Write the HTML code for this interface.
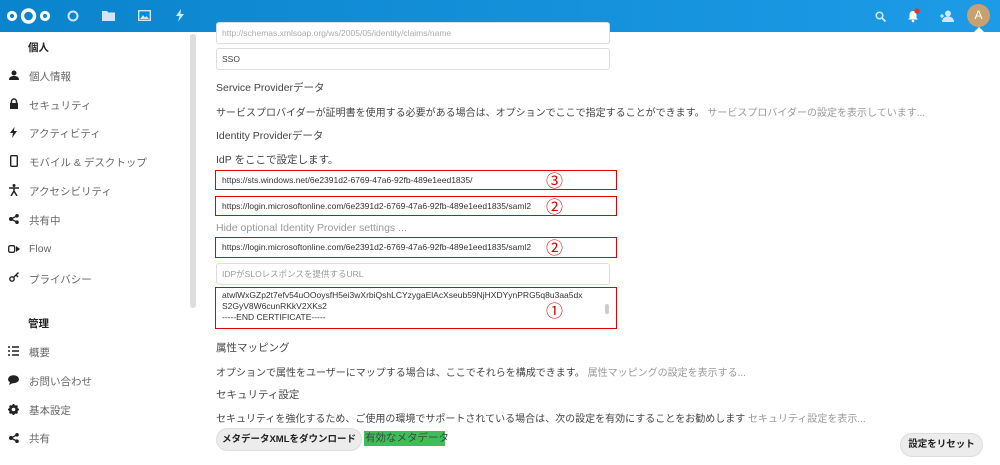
<!DOCTYPE html>
<html><head><meta charset="utf-8"><style>
*{margin:0;padding:0;box-sizing:border-box}
body{width:1000px;height:465px;overflow:hidden;background:#fff;font-family:"Liberation Sans","Noto Sans CJK JP",sans-serif;font-size:10.5px;color:#333;position:relative}
.hdr{position:absolute;left:0;top:0;width:1000px;height:32px;background:linear-gradient(90deg,#0a84cc,#1d9be6)}
.abs{position:absolute;white-space:nowrap}
.side{color:#666;font-size:10.5px}
.inp{position:absolute;left:216px;width:394px;border:1px solid #ddd;border-radius:3px;background:#fff;font-size:8.5px;color:#444;padding-left:5px}
.red{position:absolute;left:215px;width:402px;border:1.5px solid #e00000;font-size:8.5px;color:#333;padding-left:6px}
.num{position:absolute;left:546px;font-family:"Noto Sans CJK JP",sans-serif;font-size:17px;color:#d00;line-height:18px}
.t{position:absolute;left:216px;white-space:nowrap;color:#444}
.s{font-size:10px}
.g{color:#999}
</style></head><body>
<div class="hdr">
<svg class="abs" style="left:6px;top:6px" width="46" height="20" viewBox="0 0 46 20"><circle cx="6" cy="10" r="3.6" fill="none" stroke="#fff" stroke-width="3"/><circle cx="22.5" cy="10" r="6" fill="none" stroke="#fff" stroke-width="3.4"/><circle cx="39" cy="10" r="3.6" fill="none" stroke="#fff" stroke-width="3"/></svg>
<svg class="abs" style="left:67px;top:10px" width="12" height="12"><circle cx="6" cy="6" r="4.5" fill="none" stroke="#cfe6f7" stroke-width="2"/></svg>
<svg class="abs" style="left:102px;top:10px" width="13" height="11"><path d="M0 1h5l1.5 1.5H13V11H0z" fill="#cfe6f7"/></svg>
<svg class="abs" style="left:138px;top:10px" width="13" height="11"><rect x="0.7" y="0.7" width="11.6" height="9.6" fill="none" stroke="#cfe6f7" stroke-width="1.4"/><path d="M2 9l3-4 2 2.5 1.5-1.5L11 9z" fill="#cfe6f7"/></svg>
<svg class="abs" style="left:176px;top:9px" width="8" height="13"><path d="M5 0L0 7h3.5L2 13l6-8H4.5z" fill="#cfe6f7"/></svg>
<svg class="abs" style="left:875px;top:11px" width="11" height="11"><circle cx="4.5" cy="4.5" r="3.3" fill="none" stroke="#cfe6f7" stroke-width="1.5"/><path d="M7 7l3.5 3.5" stroke="#cfe6f7" stroke-width="1.8"/></svg>
<svg class="abs" style="left:907px;top:8px" width="14" height="15"><path d="M6 3c-2.5 0-3.5 2-3.5 4v3L1 11.5h10L9.5 10V7c0-2-1-4-3.5-4z" fill="#fff"/><circle cx="6" cy="13" r="1.3" fill="#fff"/><circle cx="10" cy="3" r="2.7" fill="#e9322d"/></svg>
<svg class="abs" style="left:940px;top:10px" width="14" height="12"><circle cx="8" cy="3.5" r="3" fill="#cfe6f7"/><path d="M2 12c0-4 3-5.5 6-5.5s6 1.5 6 5.5z" fill="#cfe6f7"/><path d="M0 6h4M2 4v4" stroke="#cfe6f7" stroke-width="1.3"/></svg>
<div class="abs" style="left:967px;top:4px;width:23px;height:23px;border-radius:50%;background:#c9a06f;color:#fff;font-size:12px;text-align:center;line-height:23px">A</div>
<div class="abs" style="left:974px;top:27px;width:0;height:0;border-left:5px solid transparent;border-right:5px solid transparent;border-bottom:5px solid #fff"></div>
</div>
<div class="abs" style="left:190px;top:34px;width:6px;height:274px;background:#ddd;border-radius:3px"></div>
<div class="abs" style="left:28px;top:40px;font-weight:bold;color:#222">個人</div>
<div class="abs side" style="left:29px;top:69px">個人情報</div><svg class="abs" style="left:9px;top:70px" width="10" height="10"><circle cx="5" cy="3" r="2.5" fill="#222"/><path d="M0 10c0-3 2-4 5-4s5 1 5 4z" fill="#222"/></svg>
<div class="abs side" style="left:29px;top:98px">セキュリティ</div><svg class="abs" style="left:9px;top:98px" width="10" height="11"><path d="M2.5 5V3.5a2.5 2.5 0 015 0V5" stroke="#222" stroke-width="1.5" fill="none"/><rect x="1" y="5" width="8" height="6" fill="#222"/></svg>
<div class="abs side" style="left:29px;top:126px">アクティビティ</div><svg class="abs" style="left:10px;top:127px" width="7" height="11"><path d="M4.5 0L0 6h3L2 11l5-7H4z" fill="#222"/></svg>
<div class="abs side" style="left:29px;top:155px">モバイル & デスクトップ</div><svg class="abs" style="left:10px;top:155px" width="8" height="12"><rect x="0.7" y="0.7" width="6.6" height="10.6" rx="1" fill="none" stroke="#222" stroke-width="1.4"/></svg>
<div class="abs side" style="left:29px;top:184px">アクセシビリティ</div><svg class="abs" style="left:9px;top:184px" width="10" height="12"><circle cx="5" cy="1.5" r="1.5" fill="#222"/><path d="M0 4h10M5 4v3M5 7l-3 5M5 7l3 5" stroke="#222" stroke-width="1.5"/></svg>
<div class="abs side" style="left:29px;top:213px">共有中</div><svg class="abs" style="left:9px;top:214px" width="10" height="10"><circle cx="2" cy="5" r="2" fill="#222"/><circle cx="8" cy="1.8" r="1.8" fill="#222"/><circle cx="8" cy="8.2" r="1.8" fill="#222"/><path d="M2 5l6-3.2M2 5l6 3.2" stroke="#222" stroke-width="1.3"/></svg>
<div class="abs side" style="left:29px;top:243px">Flow</div><svg class="abs" style="left:8px;top:245px" width="12" height="8"><rect x="0.7" y="0.7" width="6" height="6.6" rx="1.5" fill="none" stroke="#222" stroke-width="1.3"/><path d="M8 1l4 3-4 3z" fill="#222"/></svg>
<div class="abs side" style="left:29px;top:272px">プライバシー</div><svg class="abs" style="left:9px;top:272px" width="10" height="10"><circle cx="3" cy="7" r="2.2" fill="none" stroke="#222" stroke-width="1.4"/><path d="M4.5 5.5L9.5 0.5M7 3l2 2" stroke="#222" stroke-width="1.4"/></svg>
<div class="abs" style="left:28px;top:316px;font-weight:bold;color:#222">管理</div>
<div class="abs side" style="left:29px;top:345px">概要</div><svg class="abs" style="left:8px;top:346px" width="11" height="10"><path d="M0 1h2M0 5h2M0 9h2M4 1h7M4 5h7M4 9h7" stroke="#222" stroke-width="1.6"/></svg>
<div class="abs side" style="left:29px;top:374px">お問い合わせ</div><svg class="abs" style="left:8px;top:375px" width="11" height="10"><ellipse cx="5.5" cy="4.2" rx="5.5" ry="4" fill="#222"/><path d="M2 7l-1 3 4-2z" fill="#222"/></svg>
<div class="abs side" style="left:29px;top:403px">基本設定</div><svg class="abs" style="left:8px;top:404px" width="11" height="11"><circle cx="5.5" cy="5.5" r="3.5" fill="none" stroke="#222" stroke-width="2.2"/><path d="M5.5 0v11M0 5.5h11M1.6 1.6l7.8 7.8M9.4 1.6l-7.8 7.8" stroke="#222" stroke-width="1.8"/><circle cx="5.5" cy="5.5" r="1.8" fill="#fff"/></svg>
<div class="abs side" style="left:29px;top:431px">共有</div><svg class="abs" style="left:9px;top:433px" width="10" height="10"><circle cx="2" cy="5" r="2" fill="#222"/><circle cx="8" cy="1.8" r="1.8" fill="#222"/><circle cx="8" cy="8.2" r="1.8" fill="#222"/><path d="M2 5l6-3.2M2 5l6 3.2" stroke="#222" stroke-width="1.3"/></svg>
<div class="inp" style="top:22px;height:22px;line-height:20px;color:#aaa">http://schemas.xmlsoap.org/ws/2005/05/identity/claims/name</div>
<div class="inp" style="top:48px;height:22px;line-height:20px">SSO</div>
<div class="t" style="top:80px">Service Providerデータ</div>
<div class="t s" style="top:104px">サービスプロバイダーが証明書を使用する必要がある場合は、オプションでここで指定することができます。 <span class="g">サービスプロバイダーの設定を表示しています...</span></div>
<div class="t" style="top:128px">Identity Providerデータ</div>
<div class="t" style="top:152px">IdP をここで設定します。</div>
<div class="red" style="top:170px;height:20px;line-height:18px">https://sts.windows.net/6e2391d2-6769-47a6-92fb-489e1eed1835/</div><div class="num" style="top:171px">③</div>
<div class="red" style="top:196px;height:20px;line-height:18px">https://login.microsoftonline.com/6e2391d2-6769-47a6-92fb-489e1eed1835/saml2</div><div class="num" style="top:197px">②</div>
<div class="t g" style="top:222px">Hide optional Identity Provider settings ...</div>
<div class="red" style="top:237px;height:21px;line-height:19px">https://login.microsoftonline.com/6e2391d2-6769-47a6-92fb-489e1eed1835/saml2</div><div class="num" style="top:238px">②</div>
<div class="inp" style="top:263px;height:22px;line-height:20px;color:#999">IDPがSLOレスポンスを提供するURL</div>
<div class="red" style="top:287px;height:42px;line-height:11px;padding-top:2px">atwlWxGZp2t7efv54uOOoysfH5ei3wXrbiQshLCYzygaElAcXseub59NjHXDYynPRG5q8u3aa5dx<br>S2GyV8W6cunRKkV2XKs2<br>-----END CERTIFICATE-----</div><div class="num" style="top:301px">①</div>
<div class="abs" style="left:605px;top:304px;width:4px;height:10px;background:#ccc;border-radius:2px"></div>
<div class="t" style="top:340px">属性マッピング</div>
<div class="t s" style="top:364px">オプションで属性をユーザーにマップする場合は、ここでそれらを構成できます。 <span class="g">属性マッピングの設定を表示する...</span></div>
<div class="t" style="top:387px">セキュリティ設定</div>
<div class="t s" style="top:410px">セキュリティを強化するため、ご使用の環境でサポートされている場合は、次の設定を有効にすることをお勧めします <span class="g">セキュリティ設定を表示...</span></div>
<div class="abs" style="left:216px;top:428px;width:146px;height:23px;border-radius:12px;background:#ececec;border:1px solid #ddd;font-size:9.5px;font-weight:bold;color:#222;text-align:center;line-height:21px">メタデータXMLをダウンロード</div>
<div class="abs" style="left:364px;top:431px;width:81px;height:15px;background:#3cbf5a;color:#444;font-size:10.5px;line-height:15px;padding-left:1px">有効なメタデータ</div>
<div class="abs" style="left:900px;top:433px;width:83px;height:24px;border-radius:12px;background:#ececec;border:1px solid #ddd;font-size:9.5px;font-weight:bold;color:#222;text-align:center;line-height:22px">設定をリセット</div>
</body></html>
